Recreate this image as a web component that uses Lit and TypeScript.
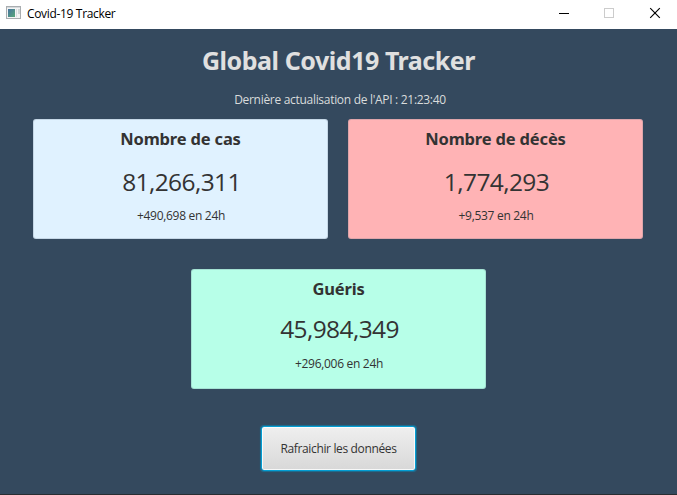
import { LitElement, html, css } from "lit";
import { customElement, property } from "lit/decorators.js";

@customElement("window-bar")
class WindowBar extends LitElement {
  static styles = css`
    :host { display: flex; height: 29px; background: #fff; color: #000; }
    .icon { margin: 6px 0 0 6px; width: 16px; height: 14px; flex: none; }
    .name { margin-left: 5px; flex: 1; line-height: 28px; font-size: 12px; letter-spacing: -0.33px; white-space: nowrap; }
    .controls { display: flex; height: 29px; width: 137px; flex: none; }
  `;
  render() {
    return html`
      <svg class="icon" viewBox="0 0 16 14">
        <defs>
          <linearGradient id="g" x1="0" y1="0" x2="1" y2="1">
            <stop offset="0" stop-color="#4673a0" /><stop offset="1" stop-color="#58a878" />
          </linearGradient>
        </defs>
        <rect x=".5" y=".5" width="14" height="12" fill="#f4f4f4" stroke="#a9adb0" />
        <rect x="1" y="1" width="13" height="1" fill="#d5d9dc" />
        <rect x="2" y="3" width="7" height="8" fill="url(#g)" />
        <rect x="10" y="3" width="1" height="8" fill="#d9dde0" />
        <rect x="12" y="3" width="2" height="5" fill="#cfd6d6" />
      </svg>
      <span class="name">Covid-19 Tracker</span>
      <svg class="controls" viewBox="0 0 137 29">
        <rect x="19" y="13" width="10" height="1" fill="#000" />
        <rect x="64.5" y="8.5" width="9" height="9" fill="none" stroke="#ccc" />
        <path d="M110.2 8.2L119.8 17.8M119.8 8.2L110.2 17.8" stroke="#000" stroke-width="1.15" />
      </svg>`;
  }
}

@customElement("stat-card")
class StatCard extends LitElement {
  @property() label = "";
  @property() total = "";
  @property() delta = "";
  static styles = css`
    :host { display: flex; flex-direction: column; align-items: center; box-sizing: border-box;
      width: 295px; height: 120px; border: 1px solid rgba(90, 110, 130, 0.2); border-radius: 3px;
      padding-top: 7px; color: #333; white-space: nowrap; }
    .label { font-family: "Noto Sans", "Open Sans", sans-serif; font-size: 16.5px; font-weight: 700;
      line-height: 24px; letter-spacing: -0.17px; }
    .total { font-size: 24.5px; line-height: 36px; margin-top: var(--total-gap, 13px); letter-spacing: -0.6px; padding-left: 2px; }
    .delta { font-size: 12px; line-height: 18px; margin-top: var(--delta-gap, 7px); letter-spacing: -0.3px; padding-left: 1px; }
  `;
  render() {
    return html`<div class="label">${this.label}</div>
      <div class="total">${this.total}</div>
      <div class="delta">${this.delta}</div>`;
  }
}

@customElement("app-root")
class AppRoot extends LitElement {
  static styles = css`
    :host { display: flex; flex-direction: column; box-sizing: border-box; width: 677px; height: 495px;
      background: #34495e; border-bottom: 1px solid #292d31; overflow: hidden;
      font-family: "Open Sans", "Noto Sans", sans-serif; }
    .page { display: flex; flex-direction: column; align-items: center; }
    h1 { margin: 13px 0 0; font-family: "Noto Sans", "Open Sans", sans-serif; font-size: 25px; line-height: 36px;
      font-weight: 700; letter-spacing: -0.45px; color: #e0e0e0; white-space: nowrap; }
    .updated { margin-top: 13px; padding-left: 3px; font-size: 12px; line-height: 18px; color: #d9dcdc;
      letter-spacing: -0.3px; white-space: nowrap; }
    .row { display: flex; gap: 20px; margin-top: 10px; padding-right: 1px; }
    .cases { background: #e0f2ff; }
    .deaths { background: #ffb3b5; }
    .healed { background: #b7ffe8; margin-top: 30px; --total-gap: 10px; --delta-gap: 8px; }
    button { box-sizing: border-box; width: 155px; height: 45px; margin-top: 37px; padding: 0;
      font-family: inherit; font-size: 12px; letter-spacing: -0.35px; color: #333; white-space: nowrap;
      border: 1px solid #039ed3; border-radius: 3px;
      background: linear-gradient(#efefef, #d8d8d8);
      box-shadow: 0 0 1px 1px rgba(3, 158, 211, 0.45), inset 0 0 0 1px rgba(255, 255, 255, 0.8); }
  `;
  render() {
    return html`
      <window-bar></window-bar>
      <main class="page">
        <h1>Global Covid19 Tracker</h1>
        <div class="updated">Dernière actualisation de l'API : 21:23:40</div>
        <div class="row">
          <stat-card class="cases" label="Nombre de cas" total="81,266,311" delta="+490,698 en 24h"></stat-card>
          <stat-card class="deaths" label="Nombre de décès" total="1,774,293" delta="+9,537 en 24h"></stat-card>
        </div>
        <stat-card class="healed" label="Guéris" total="45,984,349" delta="+296,006 en 24h"></stat-card>
        <button>Rafraichir les données</button>
      </main>`;
  }
}
